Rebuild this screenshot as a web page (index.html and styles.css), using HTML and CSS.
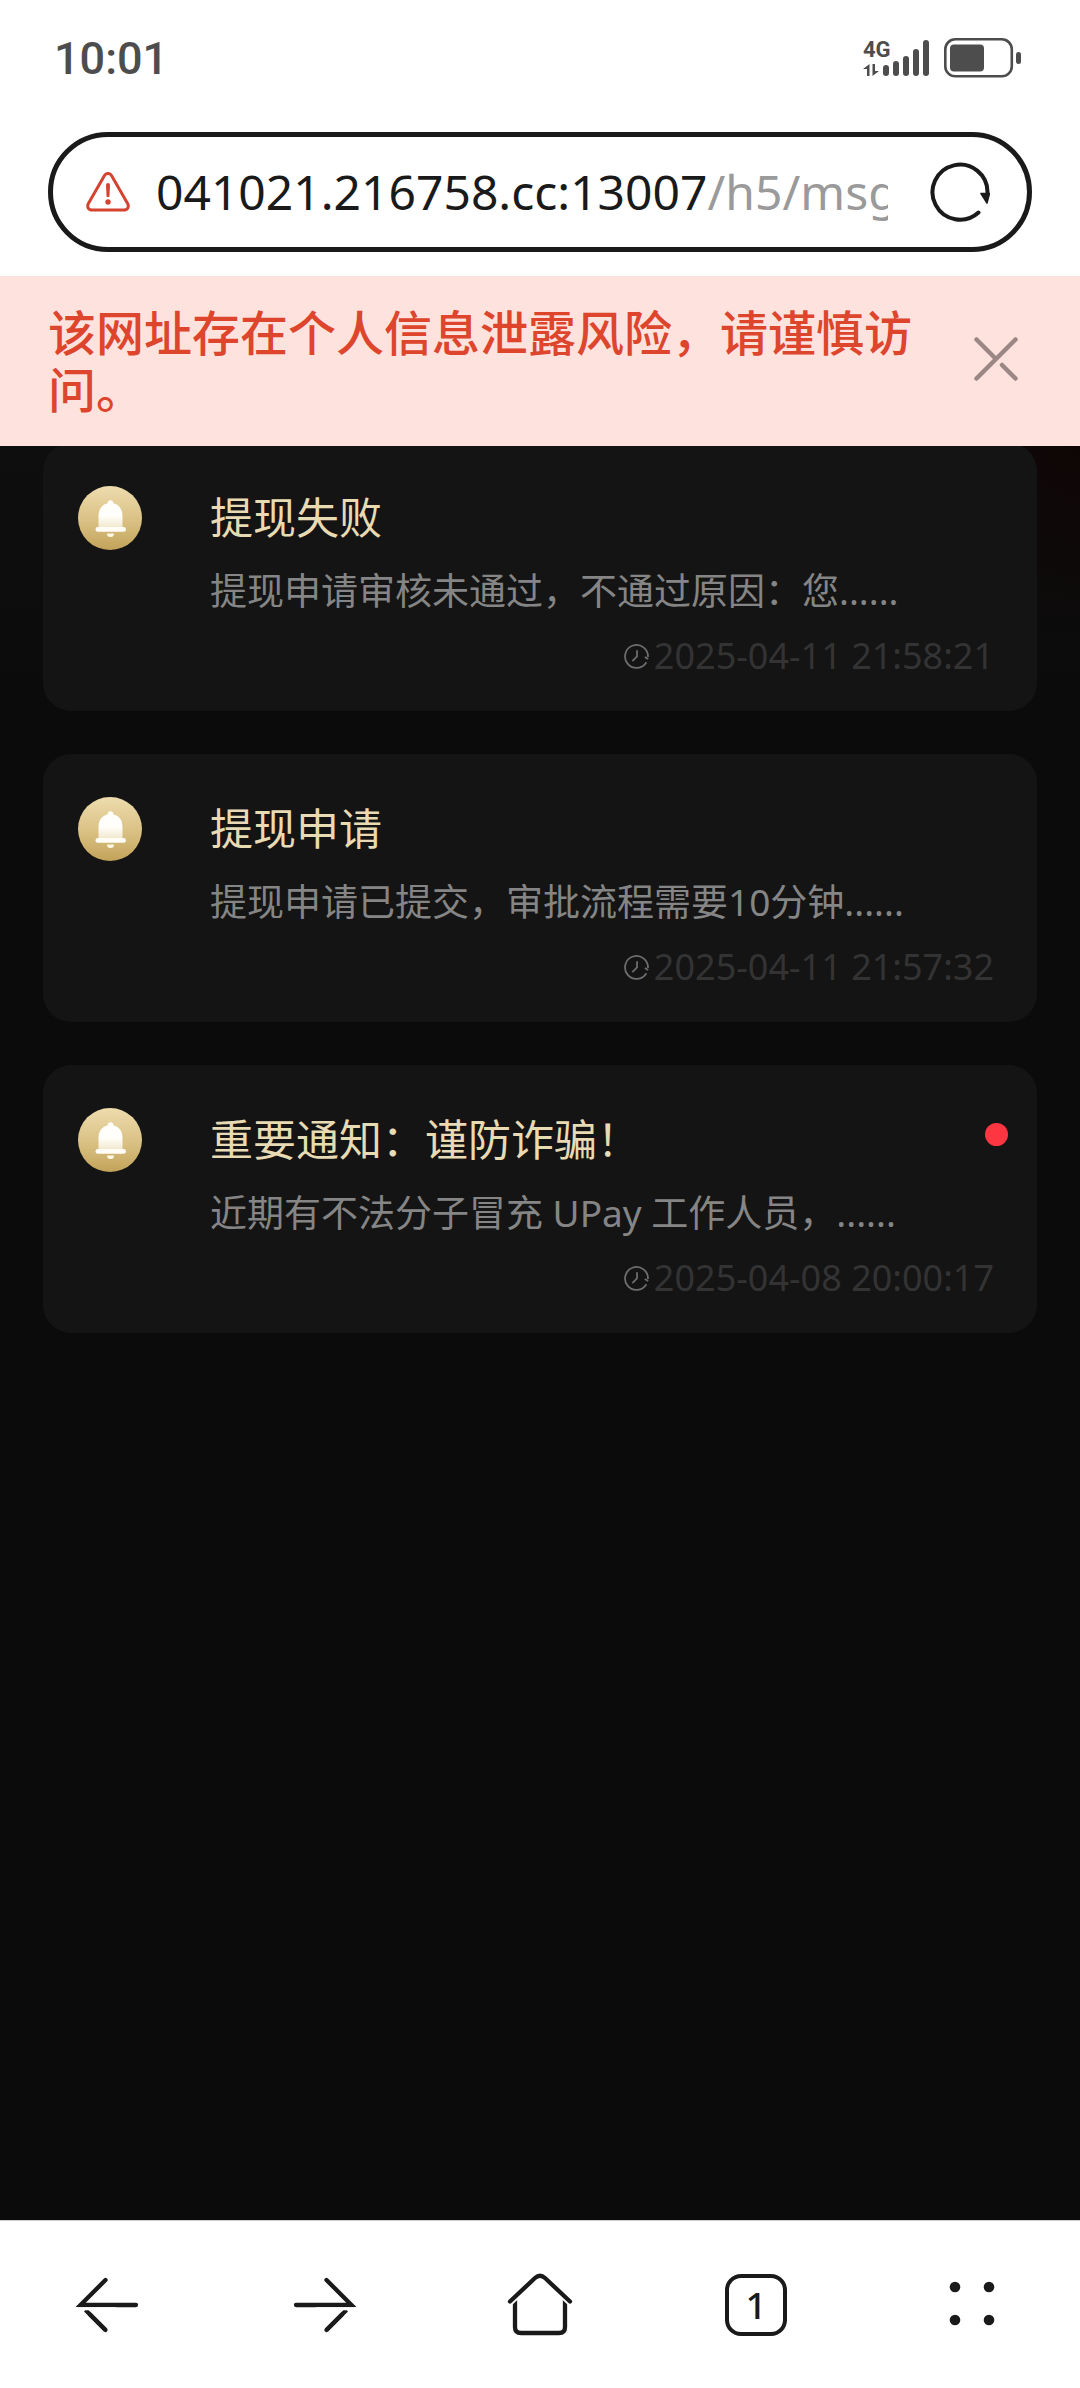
FILE: index.html
```html
<!DOCTYPE html>
<html lang="zh-CN">
<head>
<meta charset="utf-8">
<meta name="viewport" content="width=device-width, initial-scale=1">
<title>消息</title>
<link rel="stylesheet" href="styles.css">
</head>
<body>
<svg class="defs" aria-hidden="true">
  <defs>
    <linearGradient id="gold" x1="0" y1="0" x2="0" y2="1">
      <stop offset="0" stop-color="#eedcae"/>
      <stop offset="0.55" stop-color="#d9c083"/>
      <stop offset="1" stop-color="#c3a35a"/>
    </linearGradient>
    <linearGradient id="bell-body" x1="0" y1="0" x2="0" y2="1">
      <stop offset="0.5" stop-color="#fffefa"/>
      <stop offset="1" stop-color="#f0e5c6"/>
    </linearGradient>
    <symbol id="icon-bell" viewBox="0 0 64 64">
      <circle cx="32" cy="32" r="32" fill="url(#gold)"/>
      <circle cx="32.500" cy="17" r="2.800" fill="#fffefa"/>
      <path d="M20.500 43V30c0-8 5-13 12-13s12 5 12 13v13z" fill="url(#bell-body)"/>
      <rect x="17.500" y="41" width="30.500" height="4.800" rx="2.400" fill="#fffdf6"/>
      <path d="M29 47.500h7a3.500 3.500 0 0 1-7 0z" fill="#fff8e4"/>
    </symbol>
    <symbol id="icon-clock" viewBox="0 0 24 24">
      <path d="M21.500 17.500A11 11 0 1 1 23 12.500M23.200 14.500l-3.200-2" fill="none" stroke="#6e6e6e" stroke-width="1.700"/>
      <path d="M12.500 6v6L8 16.500" fill="none" stroke="#6e6e6e" stroke-width="1.700"/>
    </symbol>
  </defs>
</svg>
<div class="screen">
  <header class="top">
    <div class="status">
      <time class="status-time">10:01</time>
      <div class="status-icons">
        <div class="network">
          <span class="network-type">4G</span>
          <svg class="network-arrows" width="16" height="12" viewBox="0 0 16 12" fill="#4d4d4d"><path d="M6.500 0v12H4V5H0zM9.500 12V0H12v7h4z"/></svg>
        </div>
        <svg class="signal" width="47" height="38" viewBox="0 0 47 38" fill="#4d4d4d"><rect x="0" y="26" width="6" height="11" rx="3"/><rect x="10" y="22" width="6" height="15" rx="3"/><rect x="20" y="17" width="6" height="20" rx="3"/><rect x="30" y="10" width="6" height="27" rx="3"/><rect x="40" y="1" width="6" height="36" rx="3"/></svg>
        <svg class="battery" width="78" height="40" viewBox="0 0 78 40"><rect x="1.300" y="1.300" width="66.500" height="37" rx="10" fill="none" stroke="#4d4d4d" stroke-width="2.600"/><rect x="6" y="6.500" width="34" height="27" rx="4" fill="#4d4d4d"/><rect x="72" y="14" width="5" height="12" rx="2.500" fill="#4d4d4d"/></svg>
      </div>
    </div>
    <div class="address">
      <svg width="44" height="40" viewBox="0 0 44 40" fill="none" stroke="#d4432f" stroke-width="3"><path d="M18.500 3.500 2.400 31.500c-1.800 3.200 0 6.500 3.600 6.500h32c3.600 0 5.400-3.300 3.600-6.500L25.500 3.500c-1.700-2.700-5.300-2.700-7 0z"/><path d="M20 13a2 2 0 0 1 4 0l-.6 12h-2.800z" fill="#d4432f" stroke="none"/><circle cx="22" cy="30" r="2.700" fill="#d4432f" stroke="none"/></svg>
      <button class="url" type="button">041021.216758.cc:13007<span class="url-path">/h5/msg</span></button>
      <button class="icon-button" type="button" aria-label="刷新">
        <svg width="60" height="60" viewBox="0 0 60 60"><path d="M48.500 50.500A27.500 27.500 0 1 1 57.500 31" fill="none" stroke="#1a1a1a" stroke-width="4" stroke-linecap="round"/><path d="M51 31.500h8.500L57 41z" fill="#1a1a1a" stroke="#1a1a1a" stroke-width="1.500" stroke-linejoin="round"/></svg>
      </button>
    </div>
  </header>
  <div class="warning" role="alert">
    <p class="warning-text">该网址存在个人信息泄露风险，请谨慎访问。</p>
    <button class="icon-button" type="button" aria-label="关闭">
      <svg width="48" height="48" viewBox="0 0 48 48" fill="none" stroke="#9b8885" stroke-width="4.500" stroke-linecap="round"><path d="M4.500 4.500 23 23M43.500 4.500l-39 39M43.500 43.500 30 30"/></svg>
    </button>
  </div>
  <main class="content">
    <ul class="messages">
      <li>
        <a class="card" href="#m1">
          <svg class="card-icon" width="64" height="64"><use href="#icon-bell"/></svg>
          <div class="card-body">
            <h2 class="card-title">提现失败</h2>
            <p class="card-text">提现申请审核未通过，不通过原因：您......</p>
            <p class="card-date"><svg width="25" height="25"><use href="#icon-clock"/></svg><time>2025-04-11 21:58:21</time></p>
          </div>
        </a>
      </li>
      <li>
        <a class="card" href="#m2">
          <svg class="card-icon" width="64" height="64"><use href="#icon-bell"/></svg>
          <div class="card-body">
            <h2 class="card-title">提现申请</h2>
            <p class="card-text">提现申请已提交，审批流程需要10分钟......</p>
            <p class="card-date"><svg width="25" height="25"><use href="#icon-clock"/></svg><time>2025-04-11 21:57:32</time></p>
          </div>
        </a>
      </li>
      <li>
        <a class="card" href="#m3">
          <svg class="card-icon" width="64" height="64"><use href="#icon-bell"/></svg>
          <div class="card-body">
            <h2 class="card-title">重要通知：谨防诈骗！</h2>
            <p class="card-text">近期有不法分子冒充 UPay 工作人员，......</p>
            <p class="card-date"><svg width="25" height="25"><use href="#icon-clock"/></svg><time>2025-04-08 20:00:17</time></p>
          </div>
          <span class="unread" role="img" aria-label="未读"></span>
        </a>
      </li>
    </ul>
  </main>
  <nav class="toolbar">
    <button class="icon-button" type="button" aria-label="后退">
      <svg width="64" height="64" viewBox="0 0 64 64" fill="none" stroke="#1a1a1a" stroke-width="4.300" stroke-linecap="round"><path d="M29.500 7 4.500 32H60"/><path d="M29.500 57 9.500 37" stroke-linecap="butt"/><path d="M29.500 57 14 41.500"/><path d="M0 35.700h40" stroke="#fff" stroke-width="3" stroke-linecap="butt"/></svg>
    </button>
    <button class="icon-button" type="button" aria-label="前进">
      <svg width="64" height="64" viewBox="0 0 64 64" fill="none" stroke="#1a1a1a" stroke-width="4.300" stroke-linecap="round"><path d="m34.500 7 25 25H4"/><path d="m34.500 57 20-20" stroke-linecap="butt"/><path d="M34.500 57 50 41.500"/><path d="M24 35.700h40" stroke="#fff" stroke-width="3" stroke-linecap="butt"/></svg>
    </button>
    <button class="icon-button" type="button" aria-label="主页">
      <svg width="66" height="64" viewBox="0 0 66 64" fill="none" stroke="#1a1a1a" stroke-width="4.300" stroke-linecap="round"><path d="M8 26v28c0 4 2 6 6 6h38c4 0 6-2 6-6V26" stroke-linecap="butt"/><path d="M0 31.500 28 5.500q5-4.500 10 0L66 31.500" stroke="#fff" stroke-width="7.500" stroke-linecap="butt"/><path d="M3 28.500 28 5q5-4.500 10 0l25 23.500"/></svg>
    </button>
    <button class="icon-button" type="button" aria-label="标签页"><span class="tab-count">1</span></button>
    <button class="icon-button" type="button" aria-label="菜单">
      <svg width="64" height="64" viewBox="0 0 64 64" fill="#1a1a1a"><circle cx="15" cy="14" r="5.300"/><circle cx="49" cy="14" r="5.300"/><circle cx="15" cy="47" r="5.300"/><circle cx="49" cy="47" r="5.300"/></svg>
    </button>
  </nav>
</div>
</body>
</html>
```
FILE: styles.css
```css
* {
  box-sizing: border-box;
}

body {
  margin: 0;
  background: #fff;
  font-family: "Noto Sans", "Noto Sans CJK SC", sans-serif;
}

h2,
p,
ul {
  margin: 0;
  padding: 0;
}

ul {
  list-style: none;
}

svg {
  display: block;
  flex: none;
}

.defs {
  position: absolute;
  width: 0;
  height: 0;
}

.screen {
  display: flex;
  flex-direction: column;
  min-height: 100vh;
}

.icon-button {
  display: flex;
  align-items: center;
  justify-content: center;
  padding: 0;
  border: 0;
  background: none;
  color: #1a1a1a;
}

/* Status bar and address field */
.top {
  padding-bottom: 24px;
  background: #fff;
}

.status {
  display: flex;
  align-items: center;
  justify-content: space-between;
  height: 116px;
  padding: 0 58px 0 54px;
  color: #4d4d4d;
  font-family: Roboto, sans-serif;
}

.status-time {
  font-size: 45px;
  font-weight: 500;
}

.status-icons {
  display: flex;
  align-items: center;
}

.network {
  display: flex;
  flex-direction: column;
  gap: 4px;
  width: 20px;
}

.network-type {
  font-size: 22px;
  font-weight: 700;
  line-height: 20px;
}

.signal {
  margin-right: 14px;
}

.address {
  display: flex;
  align-items: center;
  height: 120px;
  margin: 16px 48px 0;
  padding: 0 37px 0 33px;
  border: 5px solid #1a1a1a;
  border-radius: 60px;
}

.url {
  flex: 1;
  min-width: 0;
  margin: 0 42px 0 26px;
  padding: 0;
  overflow: hidden;
  border: 0;
  background: none;
  color: #1a1a1a;
  font: 48px/68px "Noto Sans", "Noto Sans CJK SC", sans-serif;
  text-align: left;
  white-space: nowrap;
}

.url-path {
  color: #9a9a9a;
}

/* Site risk banner */
.warning {
  position: relative;
  z-index: 1;
  display: flex;
  align-items: center;
  gap: 60px;
  padding: 26px 60px 30px 48px;
  background: #fde2de;
}

.warning-text {
  flex: 1;
  color: #dd452d;
  font-family: "Noto Sans CJK SC", sans-serif;
  font-size: 48px;
  font-weight: 500;
  line-height: 57px;
}

/* Message list */
.content {
  flex: 1;
  background:
    radial-gradient(circle at right top, #0f0505, transparent 200px),
    linear-gradient(#0e0e0e, #0b0b0b 260px);
}

.messages {
  display: flex;
  flex-direction: column;
  gap: 43px;
  margin-top: -3px;
  padding: 0 43px;
}

.card {
  position: relative;
  display: flex;
  align-items: flex-start;
  gap: 68px;
  padding: 43px 43px 31px 35px;
  border-radius: 28px;
  background: #141414;
  text-decoration: none;
}

.card-body {
  display: flex;
  flex: 1;
  flex-direction: column;
  gap: 17px;
  min-width: 0;
}

.card-title {
  color: #e8dab2;
  font-size: 43px;
  font-weight: 400;
  line-height: 64px;
}

.card-text {
  overflow: hidden;
  color: #858585;
  font-size: 37px;
  line-height: 48px;
  text-overflow: ellipsis;
  white-space: nowrap;
}

.card-date {
  display: flex;
  align-items: center;
  justify-content: flex-end;
  gap: 5px;
  color: #333;
  font-size: 36px;
  line-height: 48px;
}

.unread {
  position: absolute;
  top: 58px;
  right: 29px;
  width: 23px;
  height: 23px;
  border-radius: 50%;
  background: #fe3641;
}

/* Browser toolbar */
.toolbar {
  display: grid;
  grid-template-columns: repeat(5, 1fr);
  height: 168px;
  border-top: 1px solid #ccc;
  background: #fff;
}

.tab-count {
  display: flex;
  align-items: center;
  justify-content: center;
  width: 62px;
  height: 62px;
  border: 4px solid #1a1a1a;
  border-radius: 16px;
  font: 500 37px/54px "Noto Sans", sans-serif;
}
```
